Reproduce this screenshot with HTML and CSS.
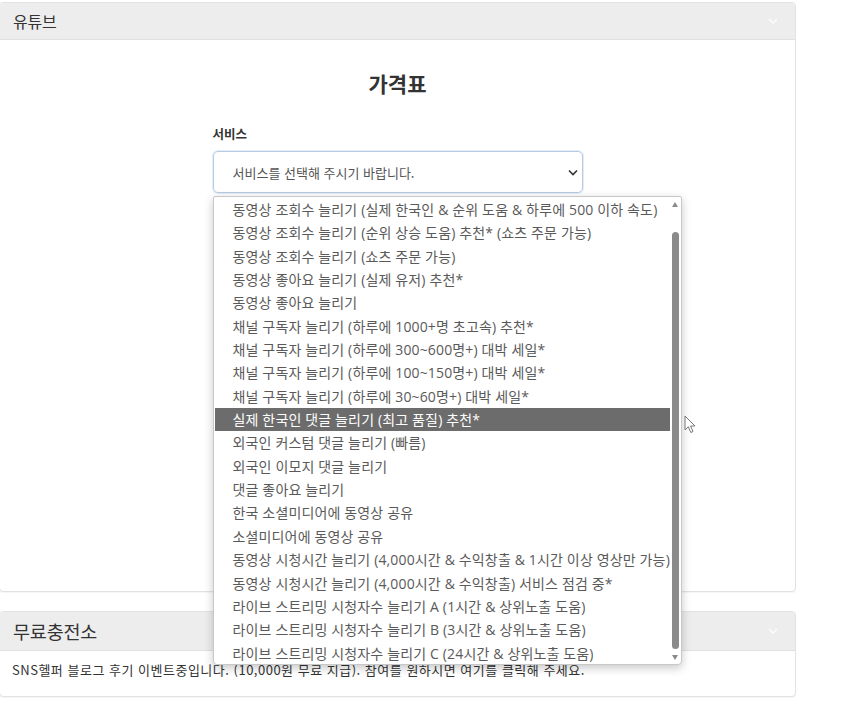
FILE: index.html
```html
<!DOCTYPE html>
<html lang="ko">
<head>
<meta charset="utf-8">
<link rel="stylesheet" href="styles.css">
</head>
<body>
<div class="page">
  <section class="card">
    <div class="card-head">
      <span class="card-title">유튜브</span>
      <svg class="head-chev" width="10" height="6" viewBox="0 0 10 6"><path d="M1 1 L5 5 L9 1" fill="none" stroke="#fff" stroke-width="1.3"/></svg>
    </div>
    <div class="card-body price">
      <h2 class="price-title">가격표</h2>
      <div class="form">
        <label class="form-label">서비스</label>
        <div class="select-wrap">
          <div class="select">
            <span>서비스를 선택해 주시기 바랍니다.</span>
            <svg class="sel-chev" width="10" height="7" viewBox="0 0 10 7"><path d="M1 1.5 L5 5.5 L9 1.5" fill="none" stroke="#333" stroke-width="1.6"/></svg>
          </div>
          <div class="dropdown">
            <ul class="options">
              <li>동영상 조회수 늘리기 (실제 한국인 &amp; 순위 도움 &amp; 하루에 500 이하 속도)</li>
              <li>동영상 조회수 늘리기 (순위 상승 도움) 추천* (쇼츠 주문 가능)</li>
              <li>동영상 조회수 늘리기 (쇼츠 주문 가능)</li>
              <li>동영상 좋아요 늘리기 (실제 유저) 추천*</li>
              <li>동영상 좋아요 늘리기</li>
              <li>채널 구독자 늘리기 (하루에 1000+명 초고속) 추천*</li>
              <li>채널 구독자 늘리기 (하루에 300~600명+) 대박 세일*</li>
              <li>채널 구독자 늘리기 (하루에 100~150명+) 대박 세일*</li>
              <li>채널 구독자 늘리기 (하루에 30~60명+) 대박 세일*</li>
              <li class="active">실제 한국인 댓글 늘리기 (최고 품질) 추천*</li>
              <li>외국인 커스텀 댓글 늘리기 (빠름)</li>
              <li>외국인 이모지 댓글 늘리기</li>
              <li>댓글 좋아요 늘리기</li>
              <li>한국 소셜미디어에 동영상 공유</li>
              <li>소셜미디어에 동영상 공유</li>
              <li>동영상 시청시간 늘리기 (4,000시간 &amp; 수익창출 &amp; 1시간 이상 영상만 가능)</li>
              <li>동영상 시청시간 늘리기 (4,000시간 &amp; 수익창출) 서비스 점검 중*</li>
              <li>라이브 스트리밍 시청자수 늘리기 A (1시간 &amp; 상위노출 도움)</li>
              <li>라이브 스트리밍 시청자수 늘리기 B (3시간 &amp; 상위노출 도움)</li>
              <li>라이브 스트리밍 시청자수 늘리기 C (24시간 &amp; 상위노출 도움)</li>
            </ul>
            <div class="scrollbar">
              <span class="arrow up"></span>
              <span class="thumb"></span>
              <span class="arrow down"></span>
            </div>
          </div>
          <svg class="cursor" width="14" height="19" viewBox="0 0 14 19"><path d="M1 1 L1 15 L4.3 11.8 L6.8 17.5 L9 16.5 L6.6 11 L11 11 Z" fill="#fff" stroke="#777" stroke-width="1" stroke-linejoin="round"/></svg>
        </div>
      </div>
    </div>
  </section>

  <section class="card second">
    <div class="card-head tall">
      <span class="card-title big">무료충전소</span>
      <svg class="head-chev" width="10" height="6" viewBox="0 0 10 6"><path d="M1 1 L5 5 L9 1" fill="none" stroke="#fff" stroke-width="1.3"/></svg>
    </div>
    <div class="card-body notice">
      SNS헬퍼 블로그 후기 이벤트중입니다. (10,000원 무료 지급). 참여를 원하시면 여기를 클릭해 주세요.
    </div>
  </section>
</div>
</body>
</html>
```

FILE: styles.css
```css
* { box-sizing: border-box; }
html, body { margin: 0; padding: 0; background: #fff; }
body {
  font-family: "Open Sans", "Noto Sans CJK KR", sans-serif;
  color: #444;
}
.page {
  width: 797px;
  margin: 2px 0 0 -1px;
  padding-bottom: 16px;
}
.card {
  border: 1px solid #e2e2e2;
  border-radius: 4px;
  background: #fff;
  box-shadow: 0 1px 1px rgba(0,0,0,0.04);
}
.card.second { margin-top: 19px; }
.card-head {
  height: 37px;
  background: #ededed;
  border-bottom: 1px solid #e0e0e0;
  border-radius: 4px 4px 0 0;
  display: flex;
  align-items: center;
  justify-content: space-between;
  padding: 0 17px 0 13px;
}
.card-head.tall { height: 39px; }
.card-title {
  font-family: "Noto Sans CJK KR", sans-serif;
  font-size: 16px;
  color: #333;
  letter-spacing: -0.2px;
  margin-top: -1px;
}
.card-title.big { font-size: 18.5px; margin-top: 0; }
.head-chev { opacity: 0.9; }

.price {
  height: 551px;
  padding-top: 28px;
}
.price-title {
  margin: 0;
  text-align: center;
  font-family: "Noto Sans CJK KR", sans-serif;
  font-size: 21px;
  line-height: 30px;
  font-weight: 700;
  color: #333;
}
.form {
  width: 370px;
  margin: 27px auto 0;
}
.form-label {
  display: block;
  font-family: "Noto Sans CJK KR", sans-serif;
  font-size: 12.5px;
  line-height: 18px;
  font-weight: 700;
  color: #333;
  margin-bottom: 8px;
}
.select-wrap { position: relative; }
.select {
  height: 42px;
  border: 1px solid #b9cbe0;
  border-radius: 5px;
  box-shadow: 0 0 0 1px rgba(170,200,235,0.35);
  display: flex;
  align-items: center;
  justify-content: space-between;
  padding: 0 4px 0 19px;
  font-family: "Noto Sans CJK KR", sans-serif;
  font-size: 13px;
  color: #555;
}
.sel-chev { margin-top: 1px; }

.dropdown {
  position: absolute;
  top: 45px;
  left: 0;
  width: 469px;
  height: 469px;
  background: #fff;
  border: 1px solid #c8c8c8;
  border-radius: 2px 2px 4px 4px;
  box-shadow: 0 3px 10px rgba(0,0,0,0.22);
  display: flex;
  z-index: 5;
}
.options {
  list-style: none;
  margin: 0;
  padding: 1px 0 0 1px;
  flex: 1;
}
.options li {
  height: 23.35px;
  line-height: 23.35px;
  padding-left: 18px;
  font-size: 14px;
  color: #5a5a5a;
  white-space: nowrap;
  letter-spacing: 0.15px;
}
.options li.active {
  background: #6c6c6c;
  color: #fff;
}
.scrollbar {
  width: 11px;
  position: relative;
  display: flex;
  flex-direction: column;
  align-items: center;
  padding: 5px 0 4px;
}
.arrow {
  width: 0; height: 0;
  border-left: 3.5px solid transparent;
  border-right: 3.5px solid transparent;
}
.arrow.up { border-bottom: 5px solid #8a8a8a; }
.arrow.down { border-top: 5px solid #8a8a8a; }
.thumb {
  width: 7px;
  flex: 1;
  margin: 25px 0 6px;
  background: #8a8a8a;
  border-radius: 4px;
}
.cursor {
  position: absolute;
  top: 264px;
  left: 471px;
  z-index: 6;
}

.notice {
  padding: 9px 12px 17px;
  font-family: "Noto Sans CJK KR", sans-serif;
  font-size: 13px;
  line-height: 19px;
  color: #333;
  letter-spacing: 0.5px;
}
```
